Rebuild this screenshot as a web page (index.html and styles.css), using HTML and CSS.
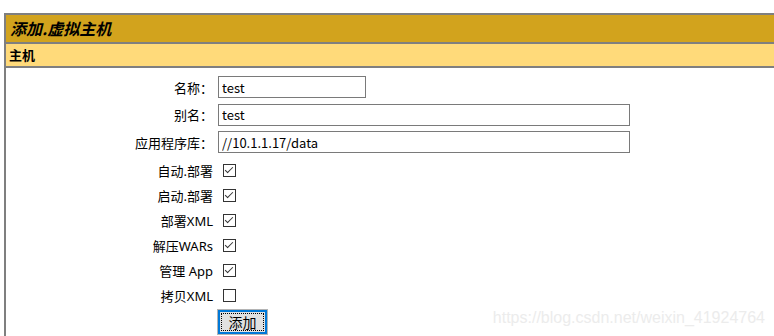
FILE: index.html
```html
<!DOCTYPE html>
<html lang="zh-CN">
<head>
    <meta charset="UTF-8">
    <meta name="viewport" content="width=device-width, initial-scale=1.0">
    <title>添加.虚拟主机</title>
    <link rel="stylesheet" href="styles.css">
</head>
<body>
    <div class="panel">
        <div class="title">添加.虚拟主机</div>
        <div class="subtitle">主机</div>
        <form class="host-form" onsubmit="return false;">
            <label class="field-label" for="name">名称：</label>
            <div class="field"><input type="text" id="name" class="short" value="test"></div>

            <label class="field-label" for="aliases">别名：</label>
            <div class="field"><input type="text" id="aliases" class="long" value="test"></div>

            <label class="field-label" for="appBase">应用程序库：</label>
            <div class="field"><input type="text" id="appBase" class="long" value="//10.1.1.17/data"></div>

            <label class="check-label" for="autoDeploy">自动.部署</label>
            <div class="check"><input type="checkbox" id="autoDeploy" checked></div>

            <label class="check-label" for="deployOnStartup">启动.部署</label>
            <div class="check"><input type="checkbox" id="deployOnStartup" checked></div>

            <label class="check-label" for="deployXML">部署XML</label>
            <div class="check"><input type="checkbox" id="deployXML" checked></div>

            <label class="check-label" for="unpackWARs">解压WARs</label>
            <div class="check"><input type="checkbox" id="unpackWARs" checked></div>

            <label class="check-label" for="manager">管理 App</label>
            <div class="check"><input type="checkbox" id="manager" checked></div>

            <label class="check-label" for="copyXML">拷贝XML</label>
            <div class="check"><input type="checkbox" id="copyXML"></div>

            <div></div>
            <div class="actions"><button type="submit"><span>添加</span></button></div>
        </form>
    </div>
    <div class="watermark">https://blog.csdn.net/weixin_41924764</div>
</body>
</html>
```

FILE: styles.css
```css
html, body {
    overflow: hidden;
}
body {
    margin: 13px 0 0 4px;
    font-family: "Noto Sans CJK SC", "Microsoft YaHei", sans-serif;
    font-size: 13px;
    color: #000;
    background: #fff;
}
.panel {
    box-sizing: border-box;
    width: 800px;
    height: 323px;
    border-top: 2px solid #7f7f7f;
    border-left: 2px solid #7f7f7f;
}
.title {
    height: 27px;
    line-height: 27px;
    padding-left: 4px;
    background-color: #d2a31d;
    border-bottom: 2px solid #7f7f7f;
    font-size: 16px;
    font-weight: bold;
    font-style: italic;
}
.subtitle {
    height: 22px;
    line-height: 22px;
    padding-left: 3px;
    background-color: #ffda7a;
    border-bottom: 2px solid #7f7f7f;
    font-weight: bold;
}
.host-form {
    display: grid;
    grid-template-columns: 207px auto;
    column-gap: 5px;
    padding-top: 8px;
}
.field-label, .check-label {
    font-family: "Noto Sans", "Noto Sans CJK SC", sans-serif;
    text-align: right;
    display: flex;
    align-items: center;
    justify-content: flex-end;
}
.field-label {
    height: 22px;
    margin-bottom: 5.5px;
}
.check-label {
    height: 25px;
}
.field {
    height: 22px;
    margin-bottom: 5.5px;
}
.field + .check-label, .field + .check-label + .check {
    margin-top: -1px;
}
input[type="text"] {
    box-sizing: border-box;
    height: 22px;
    padding: 0 3px;
    margin: 0;
    border: 1px solid #7a7a7a;
    font-family: "Noto Sans CJK SC", "Microsoft YaHei", sans-serif;
    font-size: 13px;
    color: #000;
    outline: none;
}
input.short {
    width: 148px;
}
input.long {
    width: 412px;
}
.check {
    height: 25px;
    display: flex;
    align-items: center;
}
input[type="checkbox"] {
    appearance: none;
    -webkit-appearance: none;
    box-sizing: border-box;
    width: 13px;
    height: 13px;
    margin: 0 0 0 5px;
    border: 1px solid #333;
    background: #fff;
    position: relative;
}
input[type="checkbox"]:checked::after {
    content: "";
    position: absolute;
    left: 3px;
    top: 0px;
    width: 3px;
    height: 7px;
    border-right: 1px solid #333;
    border-bottom: 1px solid #333;
    transform: rotate(45deg);
}
.actions {
    padding-top: 2px;
}
button {
    box-sizing: border-box;
    width: 49px;
    height: 24px;
    padding: 1px;
    border: 2px solid #0078d7;
    outline: 1px solid #b4b4b4;
    background-color: #e1e1e1;
    font-family: "Noto Sans CJK SC", "Microsoft YaHei", sans-serif;
    font-size: 14px;
    color: #000;
    cursor: pointer;
}
button span {
    display: block;
    height: 100%;
    box-sizing: border-box;
    line-height: 16px;
    border: 1px dotted #000;
}
.watermark {
    position: absolute;
    right: 9px;
    top: 309px;
    font-family: "Liberation Sans", Arial, sans-serif;
    font-size: 16px;
    color: #ececec;
}
```
